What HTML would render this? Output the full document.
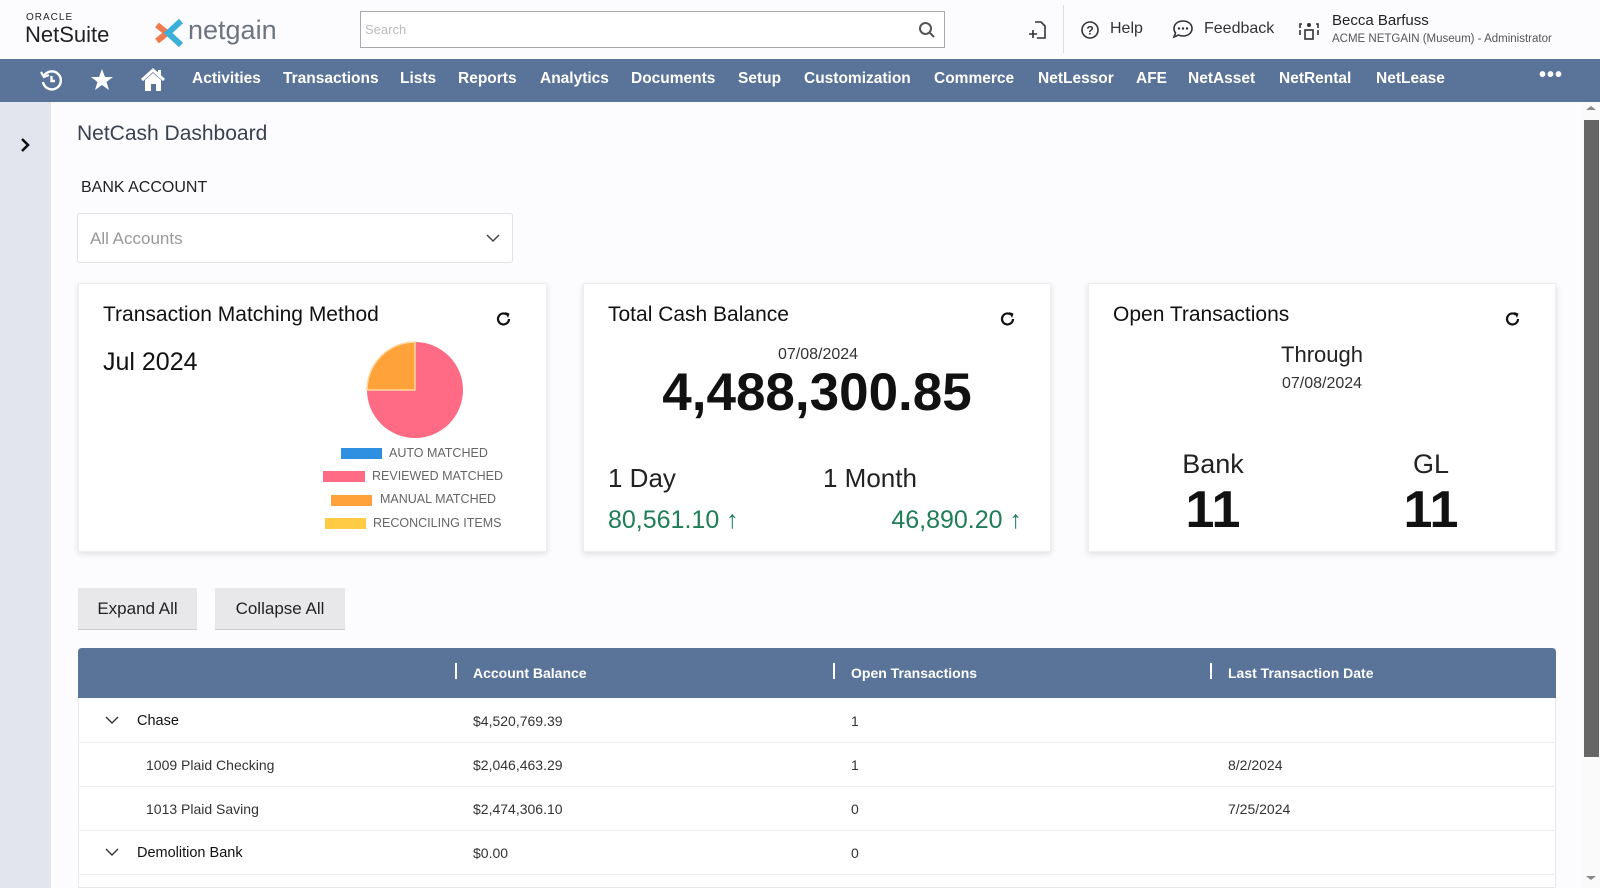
<!DOCTYPE html>
<html><head><meta charset="utf-8"><style>
*{margin:0;padding:0;box-sizing:border-box}
body{width:1600px;height:888px;overflow:hidden;background:#fcfcfe;font-family:"Liberation Sans","DejaVu Sans",sans-serif;color:#222;position:relative}
.a{position:absolute;white-space:nowrap}
.nav{position:absolute;left:0;top:59px;width:1600px;height:43px;background:#5a7399}
.nav .i{position:absolute;top:11px;color:#fff;font-weight:bold;font-size:15.5px}
.card{position:absolute;top:283px;height:269px;background:#fff;box-shadow:0 2px 6px rgba(0,0,0,.12);border:1px solid #eee}
.ct{position:absolute;left:24px;top:19px;font-size:21px;color:#111}
.rf{position:absolute;top:26px}
.leg{font-size:12.5px;color:#666}
.btn{position:absolute;top:588px;height:42px;background:#e8e8ea;border-bottom:1px solid #ccc;font-size:17px;color:#222;line-height:42px;text-align:center}
.row{position:absolute;left:78px;width:1478px;height:44px;border-bottom:1px solid #eceef2;font-size:14px;color:#333}
.row span{position:absolute;top:14px}
</style></head><body>
<div class="a" style="left:26px;top:12px;font-size:10px;letter-spacing:1px;color:#222">ORACLE</div>
<div class="a" style="left:25px;top:22px;font-size:22px;color:#222">NetSuite</div>
<svg class="a" style="left:155px;top:19px" width="30" height="28" viewBox="0 0 30 28"><path d="M2 6 L12 14 L2 22" stroke="#f07b4f" stroke-width="6" fill="none"/><path d="M26 2 L13 14 L26 26" stroke="#3ab0d8" stroke-width="6" fill="none"/></svg>
<div class="a" style="left:188px;top:15px;font-size:27px;color:#6d7480">netgain</div>
<div class="a" style="left:360px;top:11px;width:585px;height:37px;border:1px solid #aaa;background:#fff"><span class="a" style="left:4px;top:10px;font-size:13px;color:#bbb">Search</span>
<svg class="a" style="right:8px;top:9px" width="18" height="18" viewBox="0 0 18 18"><circle cx="7.5" cy="7.5" r="5.5" stroke="#555" stroke-width="2" fill="none"/><path d="M12 12 L16 16" stroke="#555" stroke-width="2"/></svg></div>
<svg class="a" style="left:1028px;top:20px" width="20" height="20" viewBox="0 0 20 20"><path d="M7 2 H13 L17 6 V18 H9" stroke="#333" stroke-width="1.6" fill="none"/><path d="M5 10 V18 M1 14 H9" stroke="#333" stroke-width="1.6"/></svg>
<div class="a" style="left:1063px;top:5px;width:1px;height:48px;background:#ddd"></div>
<svg class="a" style="left:1080px;top:20px" width="20" height="20" viewBox="0 0 20 20"><circle cx="10" cy="10" r="8" stroke="#333" stroke-width="1.6" fill="none"/><text x="10" y="14.5" font-size="12" text-anchor="middle" font-family="Liberation Sans" fill="#333" font-weight="bold">?</text></svg>
<div class="a" style="left:1110px;top:20px;font-size:16px;color:#333">Help</div>
<svg class="a" style="left:1172px;top:19px" width="22" height="21" viewBox="0 0 22 21"><path d="M11 2 C16 2 20 5 20 9.5 C20 14 16 17 11 17 C9 17 7.5 16.6 6.5 16 L2 18 L3.5 14 C2.5 12.7 2 11.2 2 9.5 C2 5 6 2 11 2Z" stroke="#333" stroke-width="1.6" fill="none"/><circle cx="7" cy="9.5" r="1.2" fill="#333"/><circle cx="11" cy="9.5" r="1.2" fill="#333"/><circle cx="15" cy="9.5" r="1.2" fill="#333"/></svg>
<div class="a" style="left:1204px;top:20px;font-size:16px;color:#333">Feedback</div>
<svg class="a" style="left:1298px;top:20px" width="22" height="22" viewBox="0 0 22 22"><circle cx="11" cy="5" r="2" fill="#333"/><rect x="7" y="10" width="8" height="9" stroke="#333" stroke-width="1.6" fill="none"/><path d="M2 8 V4 H4 M20 8 V4 H18 M2 10 V15 M20 10 V15" stroke="#333" stroke-width="1.6" fill="none"/></svg>
<div class="a" style="left:1332px;top:12px;font-size:15px;color:#222">Becca Barfuss</div>
<div class="a" style="left:1332px;top:33px;font-size:11.5px;color:#555">ACME NETGAIN (Museum) - Administrator</div>
<div class="nav">
<svg class="a" style="left:39px;top:9px" width="25" height="25" viewBox="0 0 25 25"><path d="M5 8 A9 9 0 1 1 4 14" stroke="#fff" stroke-width="2.4" fill="none"/><path d="M2 4 L5 9 L10 7" stroke="#fff" stroke-width="2.2" fill="none"/><path d="M12.5 8 V13 H16" stroke="#fff" stroke-width="2.4" fill="none"/></svg>
<svg class="a" style="left:90px;top:9px" width="24" height="24" viewBox="0 0 24 24"><path d="M12 1 L15 9 L23 9 L16.5 14 L19 22 L12 17 L5 22 L7.5 14 L1 9 L9 9Z" fill="#fff"/></svg>
<svg class="a" style="left:140px;top:8px" width="26" height="26" viewBox="0 0 26 26"><path d="M2 13 L13 3 L24 13" stroke="#fff" stroke-width="3" fill="none"/><path d="M5 13 V24 H21 V13 L13 6Z" fill="#fff"/><rect x="11" y="17" width="5" height="7" fill="#5a7399"/><rect x="18" y="3" width="3" height="6" fill="#fff"/></svg>
<div class="i" style="left:192px">Activities</div><div class="i" style="left:283px">Transactions</div><div class="i" style="left:400px">Lists</div><div class="i" style="left:458px">Reports</div><div class="i" style="left:540px">Analytics</div><div class="i" style="left:631px">Documents</div><div class="i" style="left:738px">Setup</div><div class="i" style="left:804px">Customization</div><div class="i" style="left:934px">Commerce</div><div class="i" style="left:1038px">NetLessor</div><div class="i" style="left:1136px">AFE</div><div class="i" style="left:1188px">NetAsset</div><div class="i" style="left:1279px">NetRental</div><div class="i" style="left:1376px">NetLease</div>
<div class="i" style="left:1539px;top:5px;font-size:20px;letter-spacing:1px">•••</div>
</div>
<div class="a" style="left:0;top:102px;width:51px;height:786px;background:#e2e5ee"></div>
<svg class="a" style="left:18px;top:136px" width="14" height="18" viewBox="0 0 14 18"><path d="M4 3 L10 9 L4 15" stroke="#111" stroke-width="2.6" fill="none"/></svg>
<div class="a" style="left:1583px;top:102px;width:17px;height:786px;background:#fafafa"></div>
<div class="a" style="left:1584px;top:120px;width:15px;height:637px;background:#666"></div>
<div class="a" style="left:1586px;top:106px;width:0;height:0;border:5px solid transparent;border-bottom:4px solid #888;border-top:0"></div>
<div class="a" style="left:1586px;top:876px;width:0;height:0;border:5px solid transparent;border-top:4px solid #888;border-bottom:0"></div>
<div class="a" style="left:77px;top:122px;font-size:21px;color:#3b4150">NetCash Dashboard</div>
<div class="a" style="left:81px;top:179px;font-size:16px;color:#222">BANK ACCOUNT</div>
<div class="a" style="left:77px;top:213px;width:436px;height:50px;border:1px solid #e2e2e2;border-radius:3px;background:#fff">
<span class="a" style="left:12px;top:15px;font-size:17px;color:#999">All Accounts</span>
<svg class="a" style="left:408px;top:19px" width="14" height="10" viewBox="0 0 14 10"><path d="M1 2 L7 8 L13 2" stroke="#444" stroke-width="1.5" fill="none"/></svg></div>
<div class="card" style="left:78px;width:469px">
<div class="ct">Transaction Matching Method</div>
<svg class="rf" style="left:416px" width="18" height="18" viewBox="0 0 18 18"><path d="M14 9 A5.5 5.5 0 1 1 12 4.7" stroke="#111" stroke-width="2.2" fill="none"/><path d="M10 2 L14.5 3.5 L13 8Z" fill="#111"/></svg>
<div class="a" style="left:24px;top:64px;font-size:25px;color:#111">Jul 2024</div>
<svg class="a" style="left:287px;top:57px" width="98" height="98" viewBox="0 0 98 98"><circle cx="49" cy="49" r="48" fill="#ff6a84"/><path d="M49 49 V1 A48 48 0 0 0 1 49Z" fill="#ffa23a" stroke="#ffd9a0" stroke-width="1.5"/></svg>
<div class="a" style="left:262px;top:164px;width:41px;height:11px;background:#2f8fe0"></div><div class="a leg" style="left:310px;top:162px">AUTO MATCHED</div>
<div class="a" style="left:244px;top:187px;width:42px;height:11px;background:#ff6a84"></div><div class="a leg" style="left:293px;top:185px">REVIEWED MATCHED</div>
<div class="a" style="left:252px;top:211px;width:41px;height:11px;background:#ffa23a"></div><div class="a leg" style="left:301px;top:208px">MANUAL MATCHED</div>
<div class="a" style="left:246px;top:234px;width:41px;height:11px;background:#ffcb45"></div><div class="a leg" style="left:294px;top:232px">RECONCILING ITEMS</div>
</div>
<div class="card" style="left:583px;width:468px">
<div class="ct">Total Cash Balance</div>
<svg class="rf" style="left:415px" width="18" height="18" viewBox="0 0 18 18"><path d="M14 9 A5.5 5.5 0 1 1 12 4.7" stroke="#111" stroke-width="2.2" fill="none"/><path d="M10 2 L14.5 3.5 L13 8Z" fill="#111"/></svg>
<div class="a" style="left:0;width:468px;text-align:center;top:62px;font-size:16px;color:#333">07/08/2024</div>
<div class="a" style="left:0;width:466px;text-align:center;top:78px;font-size:53px;font-weight:bold;color:#111">4,488,300.85</div>
<div class="a" style="left:24px;top:179px;font-size:26px;color:#222">1 Day</div>
<div class="a" style="left:239px;top:179px;font-size:26px;color:#222">1 Month</div>
<div class="a" style="left:24px;top:222px;font-size:25px;color:#1f7d57">80,561.10 ↑</div>
<div class="a" style="right:28px;top:222px;font-size:25px;color:#1f7d57">46,890.20 ↑</div>
</div>
<div class="card" style="left:1088px;width:468px">
<div class="ct">Open Transactions</div>
<svg class="rf" style="left:415px" width="18" height="18" viewBox="0 0 18 18"><path d="M14 9 A5.5 5.5 0 1 1 12 4.7" stroke="#111" stroke-width="2.2" fill="none"/><path d="M10 2 L14.5 3.5 L13 8Z" fill="#111"/></svg>
<div class="a" style="left:133px;width:200px;text-align:center;top:58px;font-size:22px;color:#222">Through</div>
<div class="a" style="left:133px;width:200px;text-align:center;top:91px;font-size:16px;color:#333">07/08/2024</div>
<div class="a" style="left:74px;width:100px;text-align:center;top:165px;font-size:27px;color:#222">Bank</div>
<div class="a" style="left:292px;width:100px;text-align:center;top:165px;font-size:27px;color:#222">GL</div>
<div class="a" style="left:74px;width:100px;text-align:center;top:196px;font-size:52px;font-weight:bold;color:#111">11</div>
<div class="a" style="left:292px;width:100px;text-align:center;top:196px;font-size:52px;font-weight:bold;color:#111">11</div>
</div>
<div class="btn" style="left:78px;width:119px">Expand All</div>
<div class="btn" style="left:215px;width:130px">Collapse All</div>
<div class="a" style="left:78px;top:648px;width:1478px;height:240px;background:#fff;border:1px solid #e6e6ea"></div>
<div class="a" style="left:78px;top:648px;width:1478px;height:50px;background:#5a7399;border-radius:4px 4px 0 0;color:#fff;font-weight:bold;font-size:14px">
<span class="a" style="left:377px;top:15px;width:2px;height:16px;background:#fff"></span><span class="a" style="left:395px;top:17px">Account Balance</span>
<span class="a" style="left:755px;top:15px;width:2px;height:16px;background:#fff"></span><span class="a" style="left:773px;top:17px">Open Transactions</span>
<span class="a" style="left:1132px;top:15px;width:2px;height:16px;background:#fff"></span><span class="a" style="left:1150px;top:17px">Last Transaction Date</span>
</div>
<div class="row" style="top:699px"><svg class="a" style="left:27px;top:17px" width="14" height="9" viewBox="0 0 14 9"><path d="M1 1 L7 7 L13 1" stroke="#333" stroke-width="1.4" fill="none"/></svg><span style="left:59px;color:#111;font-size:14.5px">Chase</span><span style="left:395px">$4,520,769.39</span><span style="left:773px">1</span></div>
<div class="row" style="top:743px"><span style="left:68px">1009 Plaid Checking</span><span style="left:395px">$2,046,463.29</span><span style="left:773px">1</span><span style="left:1150px">8/2/2024</span></div>
<div class="row" style="top:787px"><span style="left:68px">1013 Plaid Saving</span><span style="left:395px">$2,474,306.10</span><span style="left:773px">0</span><span style="left:1150px">7/25/2024</span></div>
<div class="row" style="top:831px"><svg class="a" style="left:27px;top:17px" width="14" height="9" viewBox="0 0 14 9"><path d="M1 1 L7 7 L13 1" stroke="#333" stroke-width="1.4" fill="none"/></svg><span style="left:59px;color:#111;font-size:14.5px">Demolition Bank</span><span style="left:395px">$0.00</span><span style="left:773px">0</span></div>
</body></html>
